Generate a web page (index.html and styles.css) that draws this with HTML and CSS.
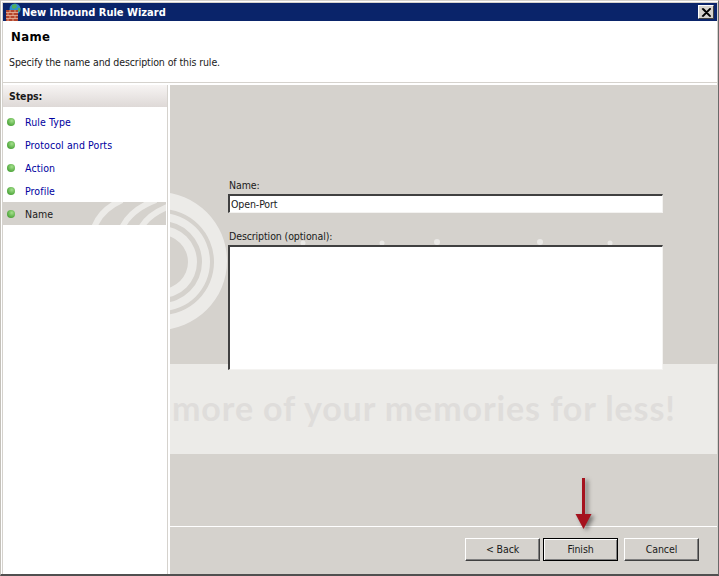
FILE: index.html
```html
<!DOCTYPE html>
<html lang="en">
<head>
<meta charset="utf-8">
<title>New Inbound Rule Wizard</title>
<link rel="stylesheet" href="styles.css">
</head>
<body>
<div class="window">
  <div class="titlebar">
    <svg class="app-icon" width="17" height="18" viewBox="0 0 17 18">
      <circle cx="10" cy="6" r="5.5" fill="#2f8fd0"/>
      <path d="M7 2 L11 1 L12 4 L9 6 L7 5Z M13 5 L15.5 5 L15 9 L13 8Z" fill="#4fae5a"/>
      <rect x="1" y="7" width="12" height="11" fill="#b5452c"/>
      <path d="M1 9.5H13M1 12.5H13M1 15.5H13M5 7V9.500M10 7V9.500M3 9.500V12.500M8 9.500V12.500M5 12.500V15.500M10 12.500V15.500M3 15.500V18M8 15.500V18" stroke="#e8b9a0" stroke-width="0.8" fill="none"/>
    </svg>
    <span class="title-text">New Inbound Rule Wizard</span>
    <button class="close-btn" type="button" aria-label="Close">
      <svg width="10" height="9" viewBox="0 0 10 9"><path d="M1 0.500L9 8.500M2.200 0.500L10 8.500M9 0.500L1 8.500M10 0.500L2 8.500" stroke="#000" stroke-width="1.100" fill="none"/></svg>
    </button>
  </div>
  <header class="page-head">
    <h1 class="page-title">Name</h1>
    <p class="page-sub">Specify the name and description of this rule.</p>
  </header>
  <div class="body">
    <nav class="steps">
      <div class="steps-head">Steps:</div>
      <ul class="step-list">
        <li class="step"><span class="dot"></span>Rule Type</li>
        <li class="step"><span class="dot"></span>Protocol and Ports</li>
        <li class="step"><span class="dot"></span>Action</li>
        <li class="step"><span class="dot"></span>Profile</li>
        <li class="step current"><span class="dot"></span>Name</li>
      </ul>
    </nav>
    <main class="panel">
      <form class="form">
        <label class="field-label" for="rule-name">Name:</label>
        <input class="name-input" id="rule-name" type="text" value="Open-Port">
        <label class="field-label desc-label" for="rule-desc">Description (optional):</label>
        <textarea class="desc-input" id="rule-desc"></textarea>
      </form>
      <footer class="footer">
        <button class="btn" type="button">&lt; Back</button>
        <button class="btn default" type="button">Finish</button>
        <button class="btn cancel" type="button">Cancel</button>
      </footer>
    </main>
  </div>
  <svg class="swirl" width="719" height="576" viewBox="0 0 719 576" aria-hidden="true">
    <defs>
      <clipPath id="panel-clip"><rect x="170" y="85" width="547" height="489"/></clipPath>
      <clipPath id="row-clip"><rect x="3" y="202" width="163" height="23"/></clipPath>
    </defs>
    <path clip-path="url(#panel-clip)" fill-rule="evenodd" fill="#fff" fill-opacity="0.55"
      d="M89 261a69 69 0 1 0 138 0a69 69 0 1 0 -138 0Z
         M108 262a53 53 0 1 0 106 0a53 53 0 1 0 -106 0Z
         M112 262a49 49 0 1 0 98 0a49 49 0 1 0 -98 0Z
         M120 262a41 41 0 1 0 82 0a41 41 0 1 0 -82 0Z
         M125 262a36 36 0 1 0 72 0a36 36 0 1 0 -72 0Z
         M134 262a27 27 0 1 0 54 0a27 27 0 1 0 -54 0Z"/>
    <g clip-path="url(#row-clip)" fill="none" stroke="#fff" stroke-opacity="0.55" stroke-width="6">
      <path d="M94 228Q100 210 122 200"/>
      <path d="M122 228Q130 210 156 200"/>
      <path d="M141 228Q148 214 172 205"/>
    </g>
    <g fill="#fff" fill-opacity="0.5">
      <circle cx="303" cy="243" r="2.500"/>
      <circle cx="382" cy="243" r="2.500"/>
      <circle cx="437" cy="242" r="3"/>
      <circle cx="540" cy="242" r="3"/>
      <circle cx="610" cy="243" r="2.500"/>
    </g>
  </svg>
  <div class="band"><span class="band-text">more of your memories for less!</span></div>
  <svg class="arrow" width="24" height="56" viewBox="0 0 24 56" aria-hidden="true">
    <rect x="7" y="0" width="3" height="38" fill="#a5121e"/>
    <path d="M0.500 36H16.500L8.500 51Z" fill="#a5121e"/>
  </svg>
</div>
</body>
</html>
```
FILE: styles.css
```css
* { box-sizing: border-box; }
html, body { margin: 0; padding: 0; }
body { width: 719px; height: 576px; overflow: hidden; background: #d5d2cd; }

.window {
  position: relative;
  width: 719px;
  height: 576px;
  display: flex;
  flex-direction: column;
  background: #d5d2cd;
  border-top: 1px solid #d5d2cd;
  border-left: 1px solid #c4c1ba;
  border-right: 1px solid #6a6a6a;
  border-bottom: 2px solid #505050;
  box-shadow: inset 1px 1px 0 #fff;
  padding: 2px 1px 0 2px;
  font-family: "DejaVu Sans Condensed", "DejaVu Sans", sans-serif;
  font-stretch: condensed;
  font-size: 10.500px;
  letter-spacing: -0.1px;
  color: #1a1a1a;
}

.titlebar {
  flex: none;
  height: 18px;
  display: flex;
  align-items: center;
  background: #0a246a;
  color: #fff;
  padding: 0 2px 0 2px;
}
.app-icon { flex: none; margin-right: 0; }
.title-text { font-weight: 700; font-size: 11px; letter-spacing: 0; flex: 1; }
.close-btn {
  flex: none;
  width: 16px;
  height: 14px;
  padding: 0;
  margin-right: 1px;
  display: flex;
  align-items: center;
  justify-content: center;
  background: #d5d2cd;
  border: 1px solid;
  border-color: #fff #404040 #404040 #fff;
}

.page-head {
  flex: none;
  height: 61px;
  background: #fff;
  padding: 7px 0 0 6px;
}
.page-title { margin: 0 0 0 2px; font-size: 13px; line-height: 17px; font-weight: 700; color: #000; letter-spacing: 0.4px; }
.page-sub { margin: 10px 0 0; line-height: 14px; }

.body {
  flex: 1;
  min-height: 0;
  display: flex;
  background: #fff;
  border-top: 1px solid #d5d2cd;
  padding-top: 2px;
}

.steps {
  flex: none;
  width: 165px;
  border-right: 1px solid #d5d2cd;
  background: #fff;
}
.steps-head {
  height: 22px;
  padding-left: 6px;
  font-weight: 700;
  line-height: 23px;
  background: linear-gradient(#f7f4f3, #ded9d7);
}
.step-list { list-style: none; margin: 3px 0 0; padding: 0; }
.step {
  height: 23px;
  display: flex;
  align-items: center;
  padding-left: 4px;
  color: #0000a0;
  letter-spacing: 0.1px;
}
.step.current { background: #d5d2cd; color: #1a1a1a; margin-right: 1px; }
.dot {
  flex: none;
  width: 8px;
  height: 8px;
  margin-right: 10px;
  border-radius: 50%;
  background: radial-gradient(circle at 60% 35%, #a4e08c, #4fa63c 70%, #3c8a30);
}

.panel {
  flex: 1;
  margin-left: 2px;
  display: flex;
  flex-direction: column;
  background: #d5d2cd;
}
.form {
  flex: 1;
  display: flex;
  flex-direction: column;
  align-items: flex-start;
  padding: 93px 0 0 58px;
}
.field-label { display: block; line-height: 14px; margin-left: 1px; }
.desc-label { margin-top: 16px; }
.name-input, .desc-input {
  display: block;
  width: 435px;
  margin: 2px 0 0;
  background: #fff;
  border-style: solid;
  border-width: 2px 1px 1px 2px;
  border-color: #404040 #f4f3f1 #f4f3f1 #404040;
  outline: none;
  font: inherit;
  letter-spacing: inherit;
  color: #1a1a1a;
  border-radius: 0;
}
.name-input { height: 19px; padding: 0 1px; }
.desc-input { position: relative; z-index: 2; height: 125px; padding: 1px; resize: none; overflow: hidden; }

.footer {
  flex: none;
  height: 48px;
  border-top: 1px solid #fff;
  padding: 11px 18px 0 0;
  display: flex;
  justify-content: flex-end;
  align-items: flex-start;
}
.btn {
  width: 75px;
  height: 23px;
  padding: 0 0 2px;
  margin: 0;
  background: #d5d2cd;
  border: 1px solid;
  border-color: #fff #404040 #404040 #fff;
  box-shadow: inset -1px -1px 0 #808080;
  font: inherit;
  letter-spacing: inherit;
  color: #1a1a1a;
}
.btn.default {
  margin-left: 3px;
  border: 1px solid #000;
  box-shadow: inset 1px 1px 0 #fff, inset -1px -1px 0 #808080;
}
.btn.cancel { margin-left: 6px; }

.swirl {
  position: absolute;
  left: -1px;
  top: -1px;
  z-index: 1;
  pointer-events: none;
}
.band {
  position: absolute;
  left: 169px;
  top: 363px;
  width: 547px;
  height: 90px;
  z-index: 1;
  background: rgba(255, 255, 255, 0.55);
  pointer-events: none;
  padding-left: 2px;
}
.band-text {
  display: block;
  font-family: Lato, sans-serif;
  font-weight: 700;
  font-stretch: normal;
  font-size: 34px;
  letter-spacing: 0.9px;
  line-height: 88px;
  color: #dfdddb;
  white-space: nowrap;
}
.arrow {
  position: absolute;
  left: 574px;
  top: 477px;
  z-index: 3;
  filter: drop-shadow(3px 2px 2px rgba(40, 40, 40, 0.55));
  pointer-events: none;
}
```
